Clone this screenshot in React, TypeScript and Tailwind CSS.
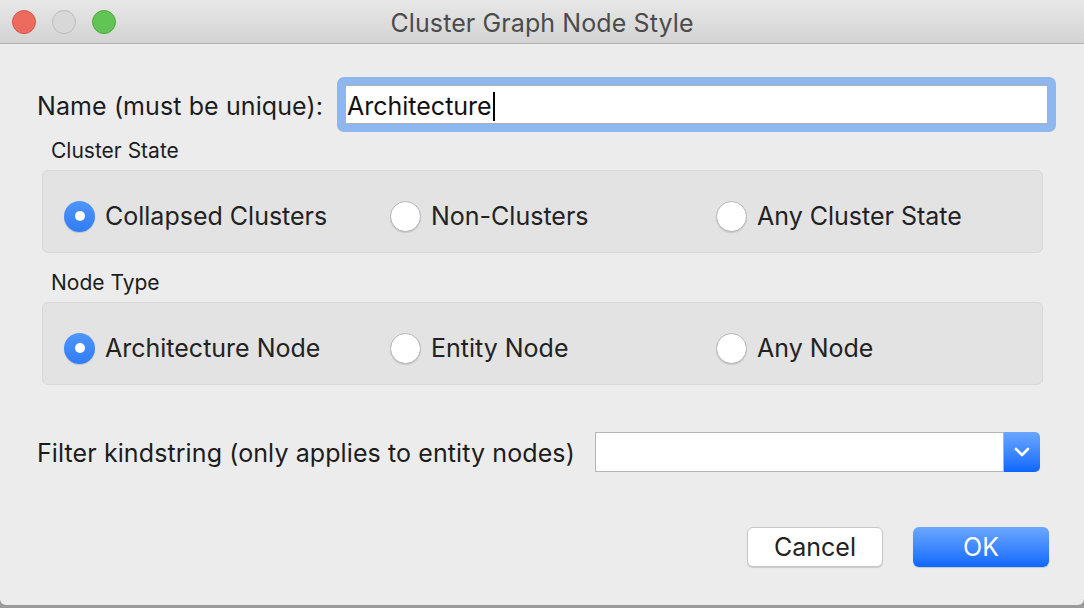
import React from "react";

function Radio({ checked, label }: { checked?: boolean; label: string }) {
  return (
    <div className="flex items-center">
      {checked ? (
        <div className="w-[31px] h-[31px] rounded-full bg-gradient-to-b from-[#4f95fb] to-[#2f7cf5] flex items-center justify-center shadow-[0_1px_1px_rgba(0,0,0,0.15)]">
          <div className="w-[10px] h-[10px] rounded-full bg-white" />
        </div>
      ) : (
        <div className="w-[31px] h-[31px] rounded-full bg-white border border-[#b7b7b7] shadow-[0_1px_1px_rgba(0,0,0,0.12)]" />
      )}
      <span className="ml-[10px] text-[25px] text-[#222222] leading-none">{label}</span>
    </div>
  );
}

function Group({ items }: { items: { label: string; checked?: boolean }[] }) {
  return (
    <div className="ml-[42px] w-[1001px] h-[83px] rounded-[6px] bg-[#e3e3e3] border border-[#d8d8d8] grid grid-cols-[326px_326px_1fr] items-center pl-[21px] pt-[9px]">
      {items.map((it) => (
        <Radio key={it.label} label={it.label} checked={it.checked} />
      ))}
    </div>
  );
}

export default function App() {
  return (
    <div
      className="w-[1084px] h-[608px] bg-[#9a9a9a] overflow-hidden"
      style={{ fontFamily: "Inter, 'Liberation Sans', sans-serif" }}
    >
      <div className="h-[605px] bg-[#ececec] rounded-b-[6px] flex flex-col">
        {/* Title bar */}
        <div className="relative h-[44px] bg-gradient-to-b from-[#e8e8e8] to-[#d3d3d3] border-b border-[#b2b2b2] flex items-center justify-center">
          <div className="absolute left-[12px] top-[10px] flex gap-[16px]">
            <div className="w-[24px] h-[24px] rounded-full bg-[#ec6a5e] border border-[#d4554b]" />
            <div className="w-[24px] h-[24px] rounded-full bg-[#d8d8d8] border border-[#bcbcbc]" />
            <div className="w-[24px] h-[24px] rounded-full bg-[#61c454] border border-[#4fa941]" />
          </div>
          <span className="mt-[3px] text-[25px] tracking-[0.1px] text-[#4b4b4b] leading-none">Cluster Graph Node Style</span>
        </div>

        {/* Name row */}
        <div className="mt-[33px] flex items-center">
          <div className="ml-[37px] w-[300px] pt-[3px] text-[25px] tracking-[0.1px] text-[#1c1c1c] leading-none">Name (must be unique):</div>
          <div className="w-[719px] h-[55px] rounded-[7px] bg-[#8eb6ef] p-[8px]">
            <div className="w-full h-full bg-white border border-[#b0b0b0] flex items-center pl-[1px] pt-[3px]">
              <span className="text-[25px] text-[#111111] leading-none">Architecture</span>
              <span className="inline-block w-[2px] h-[29px] bg-black ml-[1px]" />
            </div>
          </div>
        </div>

        {/* Cluster State */}
        <div className="mt-[5px] ml-[51px] h-[26px] flex items-center text-[21px] text-[#1c1c1c] leading-none">Cluster State</div>
        <div className="mt-[7px]">
          <Group
            items={[
              { label: "Collapsed Clusters", checked: true },
              { label: "Non-Clusters" },
              { label: "Any Cluster State" },
            ]}
          />
        </div>

        {/* Node Type */}
        <div className="mt-[16px] ml-[51px] h-[26px] flex items-center text-[21px] text-[#1c1c1c] leading-none">Node Type</div>
        <div className="mt-[7px]">
          <Group
            items={[
              { label: "Architecture Node", checked: true },
              { label: "Entity Node" },
              { label: "Any Node" },
            ]}
          />
        </div>

        {/* Filter row */}
        <div className="mt-[47px] flex items-center">
          <div className="ml-[37px] w-[558px] pt-[2px] text-[25px] tracking-[0.1px] text-[#1c1c1c] leading-none">
            Filter kindstring (only applies to entity nodes)
          </div>
          <div className="w-[445px] h-[40px] flex">
            <div className="flex-1 bg-white border border-[#b4b4b4]" />
            <div className="w-[36px] h-full rounded-r-[5px] bg-gradient-to-b from-[#6aa6ff] to-[#0a66ff] flex items-center justify-center">
              <svg width="16" height="10" viewBox="0 0 16 10" fill="none">
                <path d="M2 2 L8 8 L14 2" stroke="white" strokeWidth="2.6" strokeLinecap="round" strokeLinejoin="round" />
              </svg>
            </div>
          </div>
        </div>

        {/* Buttons */}
        <div className="mt-[55px] flex justify-end pr-[35px] gap-[30px]">
          <div className="w-[136px] h-[40px] rounded-[6px] bg-white border border-[#c6c6c6] shadow-[0_1px_1px_rgba(0,0,0,0.15)] flex items-center justify-center text-[25px] text-[#222222] leading-none">
            Cancel
          </div>
          <div className="w-[136px] h-[40px] rounded-[6px] bg-gradient-to-b from-[#6ba7ff] to-[#0b66ff] shadow-[0_1px_1px_rgba(0,0,0,0.15)] flex items-center justify-center text-[25px] text-white leading-none">
            OK
          </div>
        </div>
      </div>
    </div>
  );
}
